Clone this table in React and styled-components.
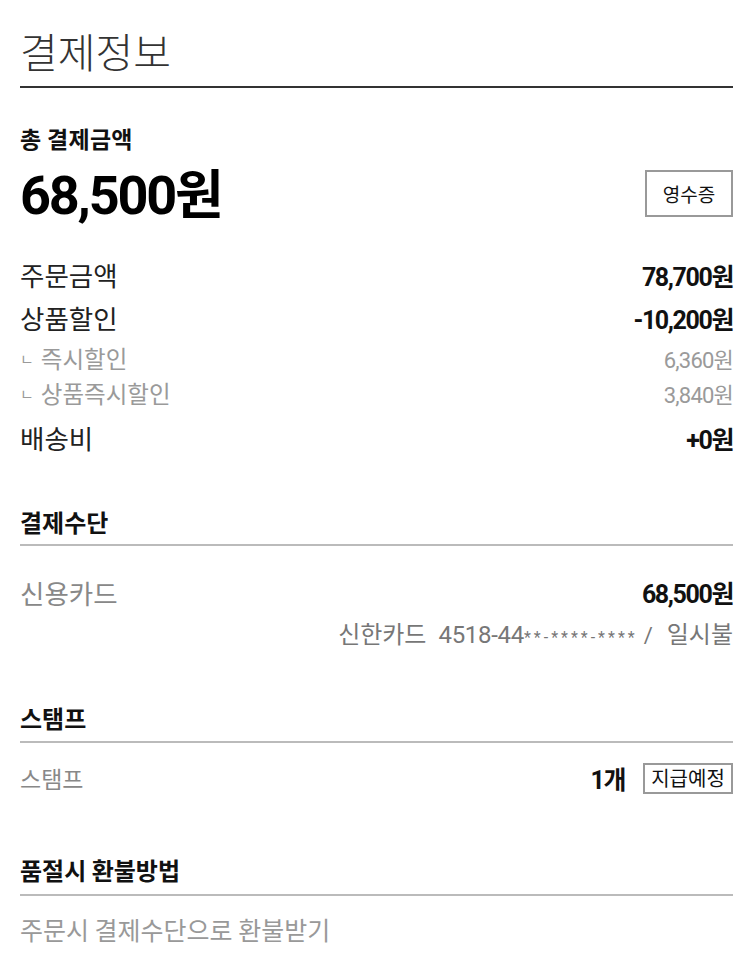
import React from 'react'
import styled, { createGlobalStyle } from 'styled-components'

const GlobalStyle = createGlobalStyle`
  body {
    margin: 0;
    background: #fff;
    font-family: "Noto Sans CJK KR", "Noto Sans", sans-serif;
    color: #222;
  }
`

const Page = styled.div`
  padding: 0 17px 0 20px;
`

const PageTitle = styled.h1`
  margin: 0;
  height: 88px;
  box-sizing: border-box;
  padding-top: 25px;
  font-size: 41px;
  font-weight: 300;
  line-height: 50px;
  color: #333;
  border-bottom: 2px solid #333;
`

const TotalBlock = styled.div`
  padding-top: 35px;
`

const TotalLabel = styled.div`
  font-size: 23px;
  font-weight: 700;
  letter-spacing: 0.3px;
  line-height: 30px;
  color: #111;
`

const TotalRow = styled.div`
  display: flex;
  justify-content: space-between;
  align-items: center;
  height: 60px;
  margin-top: 10px;
`

const TotalAmount = styled.div`
  font-family: Roboto, "Noto Sans CJK KR", sans-serif;
  font-size: 54px;
  font-weight: 700;
  letter-spacing: -2.2px;
  line-height: 60px;
  color: #000;
  span {
    font-family: "Noto Sans CJK KR", sans-serif;
    font-size: 53px;
    letter-spacing: 0;
  }
`

const BoxButton = styled.button`
  background: #fff;
  border: 2px solid #999;
  font-family: "Noto Sans CJK KR", sans-serif;
  font-size: ${({ small }) => (small ? '20px' : '19px')};
  font-weight: 400;
  letter-spacing: 0;
  color: #111;
  padding: 0;
  width: ${({ small }) => (small ? '90px' : '88px')};
  height: ${({ small }) => (small ? '31px' : '47px')};
  line-height: 1;
  cursor: pointer;
`

const Rows = styled.div`
  padding-top: 30px;
`

const Row = styled.div`
  display: flex;
  justify-content: space-between;
  align-items: center;
  height: ${({ h }) => h || 43}px;
  margin-top: ${({ mt }) => mt || 0}px;
  font-size: ${({ sub, fs }) => fs || (sub ? 23.5 : 26.5)}px;
  color: ${({ sub, muted }) => (sub ? '#9a9a9a' : muted ? '#888' : '#222')};
`

const Tick = styled.span`
  font-size: 15px;
  margin-right: 7px;
  vertical-align: 3px;
`

const Amount = styled.span`
  font-family: Roboto, "Noto Sans CJK KR", sans-serif;
  font-weight: ${({ sub }) => (sub ? 400 : 700)};
  font-size: ${({ sub }) => (sub ? '22px' : '25px')};
  letter-spacing: ${({ sub }) => (sub ? '-0.8px' : '-1.4px')};
  color: ${({ sub }) => (sub ? '#9a9a9a' : '#111')};
  display: flex;
  align-items: center;
  gap: 18px;
`

const Section = styled.section`
  margin-top: ${({ gap }) => gap}px;
`

const SectionTitle = styled.h2`
  margin: 0;
  font-size: 24px;
  font-weight: 700;
  color: #111;
  line-height: 30px;
  padding-bottom: ${({ pb }) => pb || 7}px;
  border-bottom: 2px solid #bbb;
`

const Detail = styled.div`
  display: flex;
  justify-content: flex-end;
  align-items: baseline;
  font-size: 24px;
  color: #777;
  line-height: 30px;
  margin-top: 6px;
`

const CardNumber = styled.span`
  font-family: Roboto, sans-serif;
  font-size: 24px;
  letter-spacing: -0.3px;
  margin-left: 12px;
`

const Masked = styled.span`
  font-family: Roboto, sans-serif;
  font-size: 16px;
  letter-spacing: 3px;
  margin-right: 6px;
`

const Slash = styled.span`
  font-family: Roboto, sans-serif;
  font-size: 22px;
  margin-right: 14px;
`

const Note = styled.div`
  font-size: 25px;
  line-height: 30px;
  color: #999;
  padding-top: 18px;
`

export default function App() {
  return (
    <Page>
      <GlobalStyle />
      <PageTitle>결제정보</PageTitle>
      <TotalBlock>
        <TotalLabel>총 결제금액</TotalLabel>
        <TotalRow>
          <TotalAmount>
            68,500<span>원</span>
          </TotalAmount>
          <BoxButton>영수증</BoxButton>
        </TotalRow>
      </TotalBlock>
      <Rows>
        <Row>
          <span>주문금액</span>
          <Amount>78,700원</Amount>
        </Row>
        <Row>
          <span>상품할인</span>
          <Amount>-10,200원</Amount>
        </Row>
        <Row sub h={38}>
          <span>
            <Tick>ㄴ</Tick>즉시할인
          </span>
          <Amount sub>6,360원</Amount>
        </Row>
        <Row sub h={32}>
          <span>
            <Tick>ㄴ</Tick>상품즉시할인
          </span>
          <Amount sub>3,840원</Amount>
        </Row>
        <Row mt={7}>
          <span>배송비</span>
          <Amount>+0원</Amount>
        </Row>
      </Rows>
      <Section gap={48}>
        <SectionTitle>결제수단</SectionTitle>
        <Row muted h={40} mt={26}>
          <span>신용카드</span>
          <Amount>68,500원</Amount>
        </Row>
        <Detail>
          <span>신한카드</span>
          <CardNumber>4518-44</CardNumber>
          <Masked>**-****-****</Masked>
          <Slash>/</Slash>
          <span>일시불</span>
        </Detail>
      </Section>
      <Section gap={50}>
        <SectionTitle pb={8}>스탬프</SectionTitle>
        <Row muted h={36} mt={17} fs={23}>
          <span>스탬프</span>
          <Amount>
            1개
            <BoxButton small>지급예정</BoxButton>
          </Amount>
        </Row>
      </Section>
      <Section gap={59}>
        <SectionTitle pb={9}>품절시 환불방법</SectionTitle>
        <Note>주문시 결제수단으로 환불받기</Note>
      </Section>
    </Page>
  )
}
